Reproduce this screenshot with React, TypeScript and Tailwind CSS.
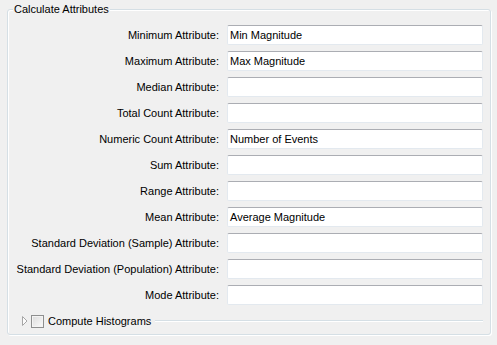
const rows: [string, string][] = [
  ['Minimum Attribute:', 'Min Magnitude'],
  ['Maximum Attribute:', 'Max Magnitude'],
  ['Median Attribute:', ''],
  ['Total Count Attribute:', ''],
  ['Numeric Count Attribute:', 'Number of Events'],
  ['Sum Attribute:', ''],
  ['Range Attribute:', ''],
  ['Mean Attribute:', 'Average Magnitude'],
  ['Standard Deviation (Sample) Attribute:', ''],
  ['Standard Deviation (Population) Attribute:', ''],
  ['Mode Attribute:', ''],
];

const App = () => {
  return (
    <div className="w-[497px] h-[345px] bg-[#f0f0f0] pl-[7px] pt-[9px] text-[11px] text-black font-['Liberation_Sans',Arial,sans-serif]">
      <div className="relative w-[484px] h-[326px] border border-[#d5dfe5] rounded-[3px] shadow-[inset_1px_1px_0_#fff,1px_1px_0_#fff]">
        <span className="absolute left-[5px] top-[-7px] px-[1px] bg-[#f0f0f0] leading-[13px]">Calculate Attributes</span>
        <div className="pt-[15px] pr-[7px] grid grid-cols-[1fr_256px] gap-x-2 gap-y-[6px] items-center">
          {rows.map(([label, value]) => (
            <div key={label} className="contents">
              <div className="text-right leading-[20px] whitespace-nowrap">{label}</div>
              <div className="h-[20px] bg-white border border-[#e3e9ef] border-t-[#abadb3] rounded-[2px] px-[2px] leading-[18px] text-[#000]">
                {value}
              </div>
            </div>
          ))}
        </div>
        <div className="flex items-center h-[16px] mt-[8px] pl-[14px] pr-[7px]">
          <svg width="6" height="10" viewBox="0 0 6 10" className="shrink-0">
            <path d="M0.5 0.5 L5 5 L0.5 9.5 Z" fill="#fcfcfc" stroke="#a6a6a6" strokeWidth="1" />
          </svg>
          <div className="ml-[3px] w-[13px] h-[13px] border border-[#8e8f8f] bg-gradient-to-br from-[#dcdcdc] to-[#fbfbfb] shadow-[inset_0_0_0_1px_#f4f4f4]" />
          <span className="ml-[4px] whitespace-nowrap">Compute Histograms</span>
          <div className="flex-1 ml-[4px] h-[2px] border-t border-[#d5dfe5] border-b-white border-b" />
        </div>
      </div>
    </div>
  );
};

export default App;
